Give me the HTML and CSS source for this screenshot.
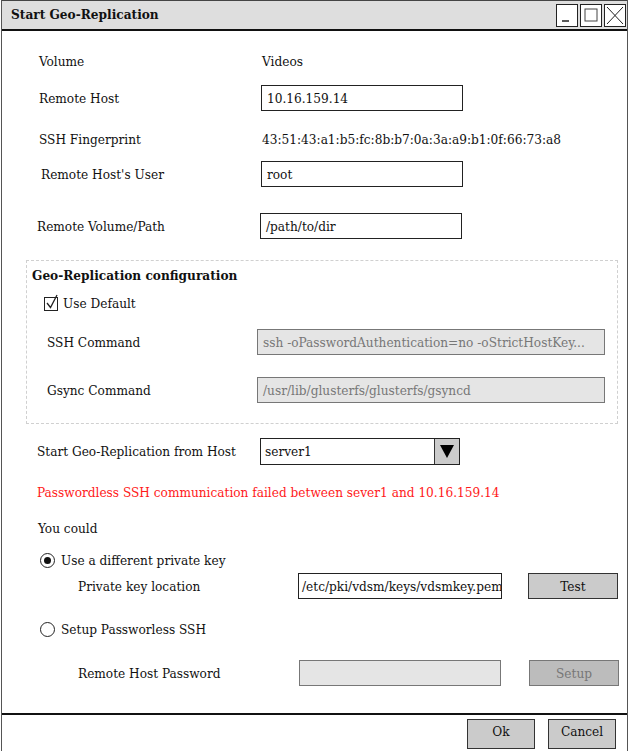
FILE: index.html
```html
<!DOCTYPE html>
<html>
<head>
<meta charset="utf-8">
<link rel="stylesheet" href="styles.css">
</head>
<body>
<div class="window">
  <div class="titlebar">
    <span class="title">Start Geo-Replication</span>
    <div class="controls">
      <span class="ctl"><svg width="20" height="21" viewBox="0 0 20 21"><path d="M5 16 H12" stroke="#222" stroke-width="1.5"/></svg></span>
      <span class="ctl"><svg width="20" height="21" viewBox="0 0 20 21"><rect x="4" y="4" width="12" height="12" fill="none" stroke="#444" stroke-width="1"/></svg></span>
      <span class="ctl"><svg width="20" height="21" viewBox="0 0 20 21"><path d="M2 2 L18 19 M18 2 L2 19" stroke="#222" stroke-width="1"/></svg></span>
    </div>
  </div>

  <div class="content">
    <div class="row r-volume"><span class="label">Volume</span><span class="value">Videos</span></div>
    <div class="row r-host"><span class="label">Remote Host</span><span class="input">10.16.159.14</span></div>
    <div class="row r-fp"><span class="label">SSH Fingerprint</span><span class="value">43:51:43:a1:b5:fc:8b:b7:0a:3a:a9:b1:0f:66:73:a8</span></div>
    <div class="row r-user"><span class="label l-user">Remote Host's User</span><span class="input">root</span></div>
    <div class="row r-path"><span class="label l-path">Remote Volume/Path</span><span class="input i-path">/path/to/dir</span></div>

    <div class="config">
      <div class="config-title">Geo-Replication configuration</div>
      <div class="check-row">
        <span class="checkbox"><svg width="16" height="17" viewBox="0 0 16 17"><rect x="0.5" y="3.5" width="13" height="13" fill="#fff" stroke="#222"/><path d="M3 9 L6.5 13.5 L13 1" fill="none" stroke="#222" stroke-width="1.3"/></svg></span>
        <span>Use Default</span>
      </div>
      <div class="crow c-ssh"><span class="clabel">SSH Command</span><span class="input disabled wide">ssh -oPasswordAuthentication=no -oStrictHostKey...</span></div>
      <div class="crow c-gsync"><span class="clabel">Gsync Command</span><span class="input disabled wide">/usr/lib/glusterfs/glusterfs/gsyncd</span></div>
    </div>

    <div class="row r-start"><span class="label l-start">Start Geo-Replication from Host</span>
      <span class="select"><span class="sel-text">server1</span><span class="sel-arrow"><svg width="16" height="16" viewBox="0 0 16 16"><path d="M1 2 H15 L8 15 Z" fill="#000"/></svg></span></span>
    </div>
    <div class="error">Passwordless SSH communication failed between sever1 and 10.16.159.14</div>
    <div class="could">You could</div>

    <div class="radio-row r-radio1"><span class="radio on"></span><span>Use a different private key</span></div>
    <div class="sub-row r-key"><span class="sublabel">Private key location</span><span class="input i-key">/etc/pki/vdsm/keys/vdsmkey.pem</span><span class="btn">Test</span></div>
    <div class="radio-row r-radio2"><span class="radio"></span><span>Setup Passworless SSH</span></div>
    <div class="sub-row r-pw"><span class="sublabel">Remote Host Password</span><span class="input i-pw disabled"></span><span class="btn btn-disabled">Setup</span></div>
  </div>

  <div class="footer">
    <span class="btn fbtn ok">Ok</span>
    <span class="btn fbtn cancel">Cancel</span>
  </div>
</div>
</body>
</html>
```

FILE: styles.css
```css
html, body {
  margin: 0;
  padding: 0;
  background: #fff;
}
body {
  font-family: "DejaVu Serif Condensed", "DejaVu Serif", serif;
  font-size: 13.5px;
  color: #111;
}
.window {
  width: 627px;
  height: 751px;
  margin-left: 1px;
  border-left: 1px solid #555;
  border-right: 1px solid #555;
  box-sizing: border-box;
  display: flex;
  flex-direction: column;
  position: relative;
}
.titlebar {
  height: 31px;
  background: #dedede;
  border-bottom: 2px solid #111;
  border-top: 1px solid #444;
  box-sizing: border-box;
  display: flex;
  align-items: center;
  justify-content: space-between;
}
.title {
  font-weight: bold;
  margin-left: 9px;
  margin-top: -2px;
}
.controls {
  display: flex;
  gap: 2px;
  margin-right: 1px;
}
.ctl {
  width: 20px;
  height: 21px;
  border: 1px solid #222;
  background: #fff;
  display: block;
}
.ctl svg { display: block; }
.content {
  flex: 1;
  display: flex;
  flex-direction: column;
  border-bottom: 2px solid #111;
}
.row {
  display: flex;
  align-items: center;
  height: 26px;
}
.label {
  width: 222px;
  padding-left: 37px;
  box-sizing: content-box;
}
.value { margin-left: 1px; }
.r-volume { margin-top: 17px; }
.r-host { margin-top: 11px; }
.r-fp { margin-top: 15px; }
.r-user { margin-top: 9px; }
.r-path { margin-top: 26px; }
.l-user { padding-left: 39px; width: 220px; }
.l-path { padding-left: 35px; width: 224px; }
.i-path { margin-left: -1px; }
.input {
  display: flex;
  align-items: center;
  width: 202px;
  height: 26px;
  box-sizing: border-box;
  border: 1px solid #222;
  padding-left: 5px;
  background: #fff;
  white-space: nowrap;
  overflow: hidden;
}
.input.disabled {
  background: #e5e5e5;
  border-color: #777;
  color: #777;
}
.config {
  margin: 21px 9px 0 24px;
  height: 164px;
  box-sizing: border-box;
  border: 1px dashed #d0d0d0;
  padding: 4px 0 0 5px;
  display: flex;
  flex-direction: column;
}
.config-title {
  font-weight: bold;
  height: 20px;
  line-height: 20px;
}
.check-row {
  display: flex;
  align-items: center;
  height: 20px;
  margin-top: 8px;
  margin-left: 12px;
  gap: 3px;
}
.checkbox svg { display: block; margin-top: -2px; }
.crow {
  display: flex;
  align-items: center;
  height: 26px;
}
.c-ssh { margin-top: 16px; }
.c-gsync { margin-top: 22px; }
.clabel {
  width: 210px;
  padding-left: 15px;
}
.wide { width: 348px; }
.r-start { margin-top: 14px; }
.l-start { padding-left: 35px; width: 223px; }
.select {
  display: flex;
  width: 200px;
  height: 27px;
  border: 1px solid #222;
  box-sizing: border-box;
}
.sel-text {
  flex: 1;
  display: flex;
  align-items: center;
  padding-left: 4px;
}
.sel-arrow {
  width: 24px;
  background: #cbcbcb;
  border-left: 1px solid #333;
  display: flex;
  align-items: center;
  justify-content: center;
}
.sel-arrow svg { display: block; }
.error {
  color: #ff1a1a;
  margin-top: 15px;
  height: 26px;
  line-height: 26px;
  padding-left: 35px;
}
.could {
  margin-top: 10px;
  height: 26px;
  line-height: 26px;
  padding-left: 36px;
}
.radio-row {
  display: flex;
  align-items: center;
  height: 22px;
  padding-left: 38px;
  gap: 6px;
}
.r-radio1 { margin-top: 8px; }
.r-radio2 { margin-top: 19px; }
.radio {
  width: 13px;
  height: 13px;
  border: 1px solid #222;
  border-radius: 50%;
  display: inline-flex;
  align-items: center;
  justify-content: center;
  background: #fff;
}
.radio.on::after {
  content: "";
  width: 7px;
  height: 7px;
  background: #111;
  border-radius: 50%;
}
.sub-row {
  display: flex;
  align-items: center;
  height: 26px;
}
.r-key { margin-top: 2px; }
.r-pw { margin-top: 20px; }
.sublabel {
  width: 220px;
  padding-left: 76px;
}
.i-key { width: 204px; padding-left: 3px; }
.i-pw { width: 202px; margin-left: 1px; }
.btn {
  display: flex;
  align-items: center;
  justify-content: center;
  width: 90px;
  height: 26px;
  box-sizing: border-box;
  border: 1px solid #333;
  background: #cbcbcb;
  margin-left: 26px;
}
.btn-disabled {
  background: #bcbcbc;
  color: #777;
  border-color: #777;
  margin-left: 28px;
}
.footer {
  height: 36px;
  display: flex;
  justify-content: flex-end;
  align-items: flex-start;
  padding-top: 4px;
  padding-right: 11px;
  gap: 13px;
  box-sizing: border-box;
}
.fbtn {
  margin-left: 0;
  height: 30px;
  padding-bottom: 6px;
}
.ok { width: 68px; }
.cancel { width: 68px; }
```
